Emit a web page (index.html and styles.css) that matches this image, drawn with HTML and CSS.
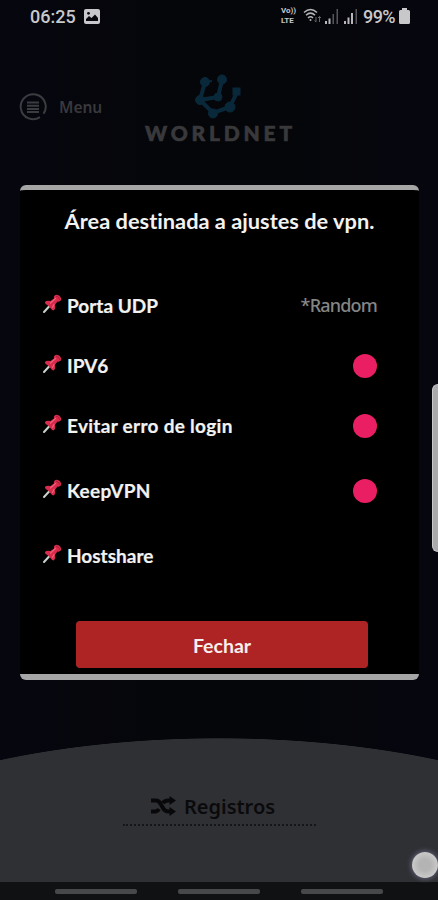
FILE: index.html
```html
<!DOCTYPE html>
<html lang="pt-BR">
<head>
  <meta charset="UTF-8">
  <meta name="viewport" content="width=device-width, initial-scale=1.0">
  <title>WorldNet</title>
  <link rel="stylesheet" href="styles.css">
</head>
<body>
  <svg class="defs" width="0" height="0">
    <symbol id="pin" viewBox="0 0 20 20">
      <path d="M2 18L7.500 12" stroke="#c9d2cc" stroke-width="2" stroke-linecap="round"/>
      <path d="M3 8Q4.500 6 8.500 7L12 4.500Q11.500 1.500 13.500 1Q16 0.300 18.200 2.500Q20 5 18.800 6.500Q17.500 8 15.500 7.500L12.800 11Q14 15 11.500 16.500Q10 16.500 8 13.500L6 11.500Q2.500 9.500 3 8Z" fill="#d92c4c"/>
      <path d="M8.500 9L13.500 4.500M10.500 13.500L12 10.500" stroke="#ee6079" stroke-width="1.200" stroke-linecap="round"/>
      <path d="M14 2Q17 3 18 6" stroke="#a91e38" stroke-width="1" fill="none"/>
    </symbol>
  </svg>

  <div class="screen">
    <div class="status">
      <span class="time">06:25</span>
      <svg class="photo" width="16" height="15" viewBox="0 0 16 15">
        <rect width="16" height="15" rx="2" fill="#c8c8cc"/>
        <path d="M2 12V10L5 7L7.500 9L11 5.500L14 9V12Z" fill="#07070d"/>
        <circle cx="4.500" cy="4.300" r="1.400" fill="#07070d"/>
      </svg>
      <span class="volte"><span>Vo))</span><span>LTE</span></span>
      <svg class="wifi" width="20" height="16" viewBox="0 0 20 16" fill="none" stroke="#b4b4b8" stroke-width="1.500">
        <path d="M1 4.500Q7.500 -1.500 14 4.500M3 7.300Q7.500 3 12 7.300M5 10Q7.500 7.600 10 10"/>
        <circle cx="7.500" cy="12" r="1" fill="#b4b4b8" stroke="none"/>
        <path d="M13 9V14M11.500 12.500L13 14M16.500 14V8.500M15 10L16.500 8.500L18 10" stroke="#66666a" stroke-width="1"/>
      </svg>
      <svg class="signal" width="14" height="15" viewBox="0 0 14 15">
        <path d="M0 12H2V15H0ZM3.500 9.500H5.500V15H3.500Z" fill="#b8b8bc"/>
        <path d="M7.500 5H9V15H7.500ZM11.500 0H13V15H11.500Z" fill="#55555a"/>
      </svg>
      <svg class="signal second" width="14" height="15" viewBox="0 0 14 15">
        <path d="M0 12H2V15H0ZM3.500 8.500H5.500V15H3.500ZM7 4H9V15H7Z" fill="#b8b8bc"/>
        <path d="M11.500 0H13V15H11.500Z" fill="#55555a"/>
      </svg>
      <span class="percent">99%</span>
      <svg class="battery" width="11" height="16" viewBox="0 0 11 16">
        <path d="M3 0H8V2H9.500Q11 2 11 3.500V14.500Q11 16 9.500 16H1.500Q0 16 0 14.500V3.500Q0 2 1.500 2H3Z" fill="#c8c8cb"/>
      </svg>
    </div>

    <div class="header">
      <div class="menu">
        <svg width="28" height="28" viewBox="0 0 28 28" fill="none" stroke="#3b3b40" stroke-width="2">
          <path d="M21 24.200A12.500 12.500 0 1 1 24.500 20.800"/>
          <path d="M8 9.500H20M8 12.700H20M8 15.900H20M8 19H20"/>
        </svg>
        <span>Menu</span>
      </div>
      <div class="brand">
        <svg width="48" height="46" viewBox="0 0 48 46" fill="#09293b" stroke="#09293b">
          <path d="M10 8L5 26L18 39L35 33L42 18M5 26L23 23L27 6" fill="none" stroke-width="4"/>
          <path d="M10 8L17 7" fill="none" stroke-width="2"/>
          <circle cx="10" cy="8" r="4.500"/>
          <circle cx="27" cy="5.500" r="4.500"/>
          <circle cx="5" cy="26" r="4.500"/>
          <circle cx="23" cy="23" r="4"/>
          <circle cx="18" cy="39.500" r="4.500"/>
          <circle cx="35" cy="33" r="5"/>
          <rect x="38" y="14" width="7" height="7"/>
        </svg>
        <span>WORLDNET</span>
      </div>
    </div>

    <div class="bottom">
      <div class="logs">
        <svg width="25" height="20" viewBox="0 0 25 20">
          <path d="M0 4.500H5Q8 4.500 10 8.500L12 12Q13.500 15.500 18 15.500H20M0 15.500H4Q6.500 15.500 8 13M12 7Q14 4.500 17 4.500H20" fill="none" stroke="#08080a" stroke-width="4"/>
          <path d="M18.500 0L25 4.500L18.500 9ZM18.500 11L25 15.500L18.500 20Z" fill="#08080a"/>
        </svg>
        <span>Registros</span>
      </div>
    </div>
    <div class="navbar"><i></i><i></i><i></i></div>
  </div>

  <div class="modal">
    <h1>Área destinada a ajustes de vpn.</h1>
    <div class="row"><svg class="pin"><use href="#pin"/></svg><span class="label">Porta UDP</span><span class="value">*Random</span></div>
    <div class="row"><svg class="pin"><use href="#pin"/></svg><span class="label">IPV6</span><span class="dot"></span></div>
    <div class="row"><svg class="pin"><use href="#pin"/></svg><span class="label wide">Evitar erro de login</span><span class="dot"></span></div>
    <div class="row tall"><svg class="pin"><use href="#pin"/></svg><span class="label wide">KeepVPN</span><span class="dot"></span></div>
    <div class="row"><svg class="pin"><use href="#pin"/></svg><span class="label">Hostshare</span></div>
    <button class="close">Fechar</button>
  </div>

  <div class="edge-handle"></div>
  <div class="touch"></div>
</body>
</html>
```
FILE: styles.css
```css
* {
  box-sizing: border-box;
}
body {
  margin: 0;
  background: #05060b;
  font-family: Lato, "Noto Sans", sans-serif;
}
.defs {
  position: absolute;
}
.screen {
  position: relative;
  width: 438px;
  height: 900px;
  display: flex;
  flex-direction: column;
  overflow: hidden;
  background: linear-gradient(90deg, #06060f, #050609 45%, #050609 60%, #06060f);
}
.status {
  height: 32px;
  padding: 0 28px 0 30px;
  display: flex;
  align-items: center;
  color: #c8c8cb;
  font-family: Roboto, sans-serif;
  font-size: 18px;
  font-weight: 500;
}
.photo {
  margin-left: 8px;
}
.volte {
  margin-left: auto;
  display: flex;
  flex-direction: column;
  font-size: 8px;
  font-weight: 700;
  line-height: 10px;
}
.wifi {
  margin-left: 7px;
}
.signal {
  margin-left: 2px;
}
.second {
  margin-left: 5px;
}
.percent {
  margin-left: 5px;
  letter-spacing: -0.6px;
}
.battery {
  margin-left: 4px;
}
.header {
  height: 130px;
  display: flex;
}
.menu {
  width: 142px;
  height: 28px;
  margin-top: 61px;
  padding-left: 19px;
  display: flex;
  align-items: center;
  gap: 12px;
  color: #39393c;
  font-family: "Noto Sans", sans-serif;
  font-size: 15.5px;
  font-weight: 600;
}
.brand {
  width: 154px;
  margin-top: 42px;
  display: flex;
  flex-direction: column;
  align-items: center;
  color: #39393c;
  font-family: Lato, sans-serif;
  font-size: 21px;
  font-weight: 900;
  line-height: 26px;
  letter-spacing: 3.8px;
  -webkit-text-stroke: 0.6px #39393c;
}
.brand span {
  margin-right: -3px;
}
.bottom {
  height: 144px;
  margin-top: auto;
  display: flex;
  justify-content: center;
  background: radial-gradient(ellipse 442px 166px at 50% 166px, #2f3034 99.6%, transparent 100%);
}
.logs {
  width: 193px;
  height: 88px;
  padding-top: 50px;
  padding-right: 12px;
  display: flex;
  align-items: center;
  justify-content: center;
  gap: 8px;
  border-bottom: 2px dotted #151518;
  color: #0a0a0c;
  font-family: "Noto Sans", sans-serif;
  font-size: 20px;
  font-weight: 600;
}
.navbar {
  height: 18px;
  padding: 0 55px;
  display: flex;
  align-items: center;
  justify-content: space-between;
  background: #0f1112;
}
.navbar i {
  width: 82px;
  height: 5px;
  border-radius: 2px;
  background: #47484a;
}
.modal {
  position: absolute;
  left: 20px;
  top: 185px;
  width: 399px;
  height: 495px;
  padding: 0 42px 0 22px;
  display: flex;
  flex-direction: column;
  border-top: 5px solid #a6a6a6;
  border-bottom: 6px solid #a6a6a6;
  border-radius: 6px;
  background: #000;
  color: #f2f2f2;
  font-variant-ligatures: none;
}
h1 {
  margin: 16px -20px 40px 0;
  font-size: 21.8px;
  font-weight: 700;
  line-height: 30px;
  text-align: center;
  white-space: nowrap;
}
.row {
  height: 60px;
  flex: none;
  display: flex;
  align-items: center;
}
.row.tall {
  height: 70px;
}
.pin {
  width: 20px;
  height: 20px;
  margin-top: -4px;
  flex: none;
}
.label {
  margin-top: -2px;
  margin-left: 5px;
  font-size: 19px;
  font-weight: 700;
  -webkit-text-stroke: 0.2px #f2f2f2;
}
.label.wide {
  letter-spacing: 0.3px;
}
.value {
  margin-top: -2px;
  margin-left: auto;
  color: #858585;
  font-family: "Noto Sans", sans-serif;
  font-size: 18px;
  font-weight: 500;
  letter-spacing: -0.8px;
}
.dot {
  width: 24px;
  height: 24px;
  margin-left: auto;
  border-radius: 50%;
  background: #e91e63;
}
.close {
  width: 292px;
  height: 47px;
  margin: auto 0 6px 34px;
  padding-top: 3px;
  border: none;
  border-radius: 4px;
  background: #ae2424;
  color: #f7eeee;
  font-family: Lato, sans-serif;
  font-size: 19.5px;
  font-weight: 700;
}
.edge-handle {
  position: absolute;
  left: 432px;
  top: 384px;
  width: 6px;
  height: 168px;
  border: 1px solid #c8c8c8;
  border-right: none;
  border-radius: 6px 0 0 6px;
  background: #aaa9ab;
}
.touch {
  position: absolute;
  left: 412px;
  top: 852px;
  width: 26px;
  height: 26px;
  border-radius: 50%;
  background: radial-gradient(circle, #b4b4b4 30%, #d2d2d2 85%);
  box-shadow: 0 0 5px 1px #62627a;
}
```
